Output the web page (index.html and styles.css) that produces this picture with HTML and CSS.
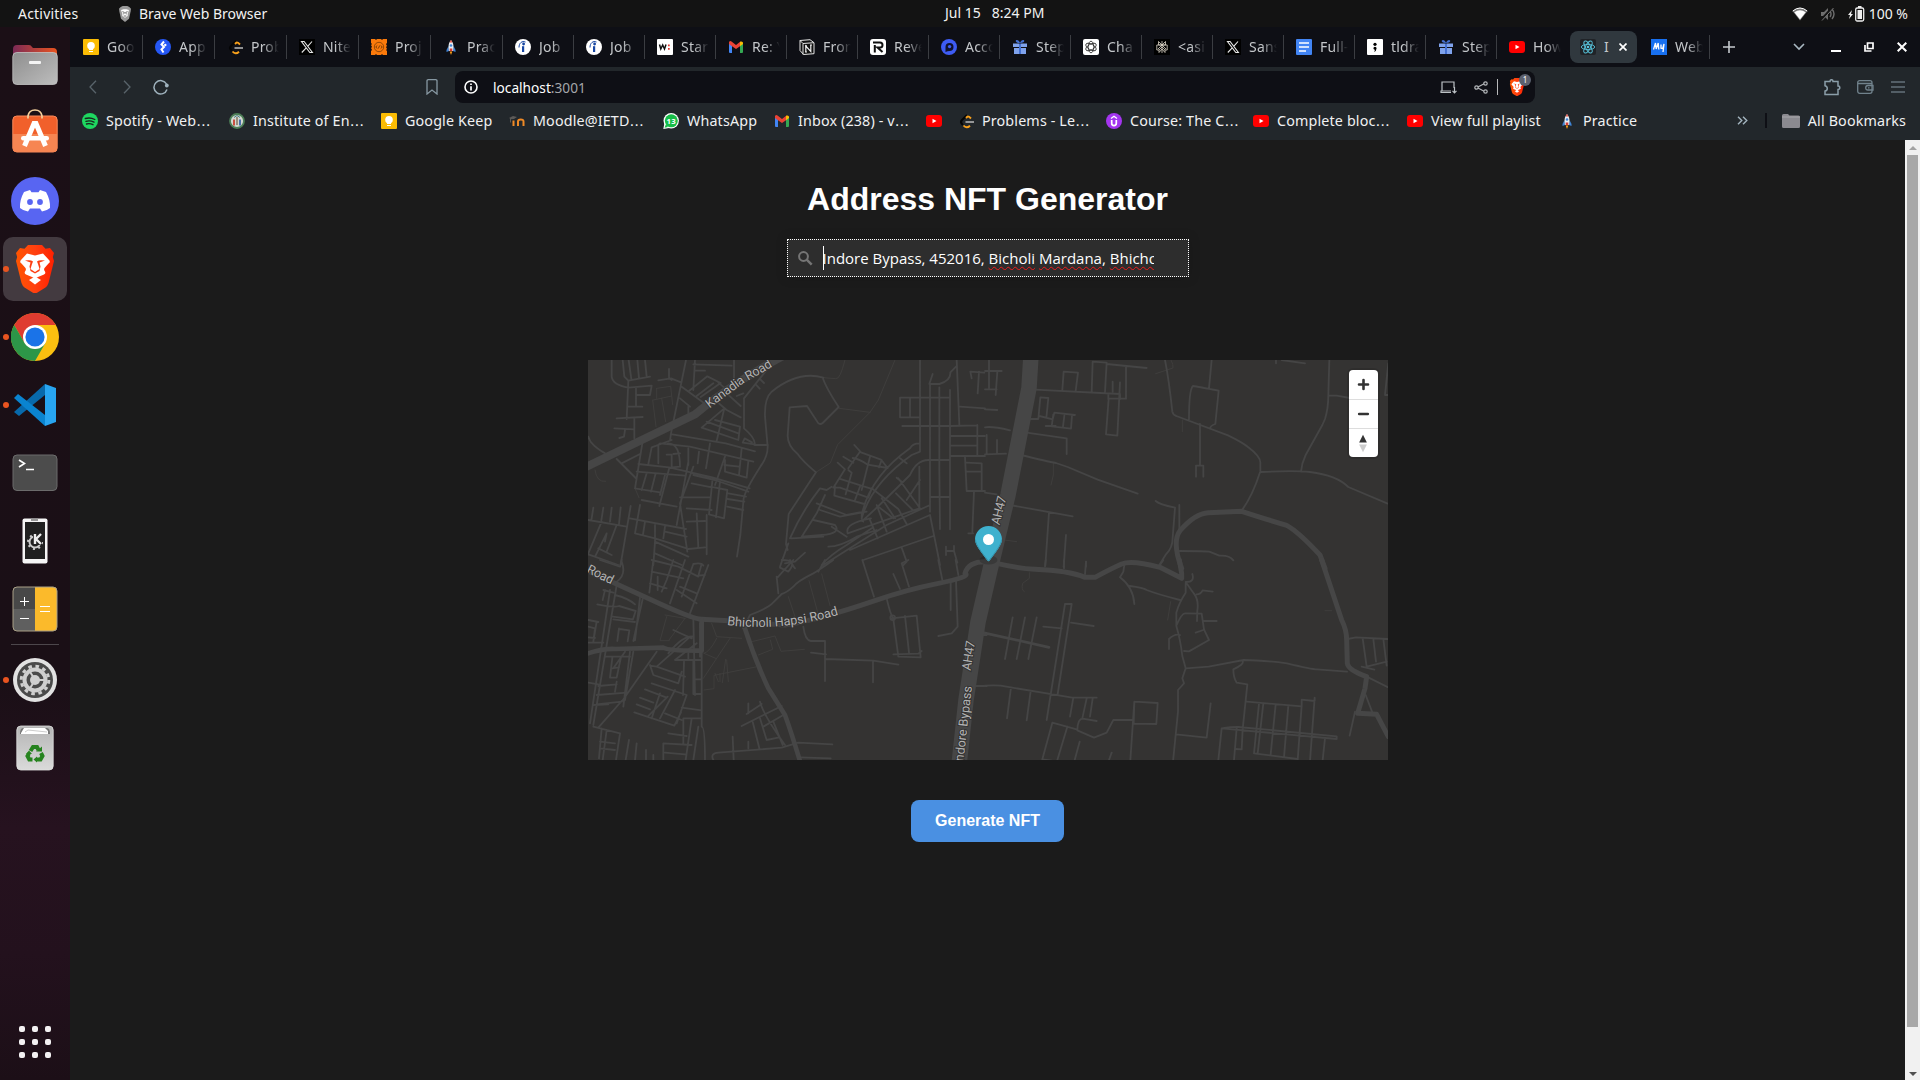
FILE: index.html
```html
<!DOCTYPE html>
<html lang="en">
<head>
<meta charset="utf-8">
<title>Address NFT Generator</title>
<link rel="stylesheet" href="styles.css">
</head>
<body>
<svg class="defs" aria-hidden="true">
  <defs>
    <linearGradient id="gFolder" x1="0" y1="0" x2="1" y2="1"><stop offset="0" stop-color="#8e8e8e"/><stop offset="1" stop-color="#bdbdbd"/></linearGradient>
    <linearGradient id="gTab" x1="0" x2="1"><stop offset="0" stop-color="#7c2a56"/><stop offset="1" stop-color="#e95420"/></linearGradient>
    <linearGradient id="gBrave" x1="0" x2="1"><stop offset="0" stop-color="#ff5500"/><stop offset=".5" stop-color="#ff4010"/><stop offset="1" stop-color="#ff2000"/></linearGradient>
    <linearGradient id="gTrash" x1="0" y1="0" x2="0" y2="1"><stop offset="0" stop-color="#b5b5b5"/><stop offset="1" stop-color="#dadada"/></linearGradient>
  </defs>
  <symbol id="keep" viewBox="0 0 16 16"><rect width="16" height="16" rx="1" fill="#fbbc04"/><circle cx="8" cy="6.800" r="3.800" fill="#fff"/><path d="M6 9h4v2H6zM6 12h4v1H6z" fill="#fff"/></symbol>
  <symbol id="app" viewBox="0 0 16 16"><circle cx="8" cy="8" r="8" fill="#2557f5"/><path d="M9 2.500 6.500 5.500 9 8l-2.500 2.500L8.500 13.500" fill="none" stroke="#fff" stroke-width="2"/><circle cx="10.300" cy="6" r="1.200" fill="#fff"/></symbol>
  <symbol id="leet" viewBox="0 0 16 16"><path d="M9 2 4 7q-2 2 0 4l1 1" fill="none" stroke="#050505" stroke-width="2"/><path d="m8 5 1.500-1.500q1-.5 3.500 2M5.500 12.500q3 3.500 6.500.2" fill="none" stroke="#f9a11b" stroke-width="1.900"/><path d="M7.500 9H16" stroke="#b3b3b3" stroke-width="1.600"/></symbol>
  <symbol id="xlogo" viewBox="0 0 16 16"><rect width="16" height="16" fill="#000"/><path d="M2.500 2.500h2.600l8.300 11h-2.600zM13 2.500 8.700 7.300M7 9.200l-4.200 4.300" fill="none" stroke="#e8e8e8" stroke-width="1.100"/></symbol>
  <symbol id="orange" viewBox="0 0 16 16"><path d="M0 0h4l1 1 1-1h4l1 1 1-1h4v4l-1 1 1 2-1 1 1 2-1 1 1 1v4h-4l-1-1-1 1H6l-1-1-1 1H0v-4l1-1-1-2 1-1-1-2 1-1-1-1z" fill="#fb7a0b"/><circle cx="8" cy="8" r="4.700" fill="none" stroke="#7a3c05" stroke-width=".8"/><path d="m6.300 6.500-1.600 1.500 1.600 1.500m3.400-3 1.600 1.500-1.600 1.500M8.700 6.500l-1.400 3" fill="none" stroke="#5a2c04" stroke-width=".8"/></symbol>
  <symbol id="rocket" viewBox="0 0 16 16"><path d="M5.500 7 3.500 11v2l2.500-1zM10.500 7l2 4v2L10 12z" fill="#3f84d6"/><path d="M8 1C5.500 4 5 7 6 12h4c1-5 .5-8-2-11z" fill="#e9eef3"/><path d="M8 1 6.600 3.500h2.800z" fill="#e84b3c"/><circle cx="8" cy="6.500" r="1.300" fill="#3f84d6"/><path d="M6.700 9.500h2.600V12H6.700z" fill="#d53b35"/><path d="M6.700 12.500h2.600L8 16z" fill="#ff9d13"/></symbol>
  <symbol id="indeed" viewBox="0 0 16 16"><circle cx="8" cy="8" r="8" fill="#fff"/><path d="M7 7.200h2.200V13H7z" fill="#1746a2"/><circle cx="8.600" cy="5" r="1.400" fill="#1746a2"/><path d="M4 8.500C4 4 7 1.500 10.500 3" fill="none" stroke="#1746a2" stroke-width="1"/></symbol>
  <symbol id="wlogo" viewBox="0 0 16 16"><rect width="16" height="16" rx="1" fill="#fff"/><path d="m2.500 5.500 1.300 4.500L5.700 6l1.800 4 1.500-4.500" fill="none" stroke="#111" stroke-width="1.500"/><path d="M11 5.500h1.700v1.700H11zM11 9h1.700v1.700H11z" fill="#e5362d"/></symbol>
  <symbol id="gmail" viewBox="0 0 16 16"><path d="M1 3.500 4 5v9H2q-1 0-1-1z" fill="#4285f4"/><path d="m12 5 3-1.500V13q0 1-1 1h-2z" fill="#34a853"/><path d="M1 5V3q1-1.500 2.500-.5L8 6l4.500-3.500-.5 4.700L8 10 4 7.200z" fill="#ea4335"/><path d="m12 3 .5-.5Q15 2 15 4v1l-3 2.200z" fill="#fbbc04"/></symbol>
  <symbol id="notion" viewBox="0 0 16 16"><path d="m1 1.500 10-.8 4 3v11l-10.500.8L1 11.500z" fill="#111" stroke="#e5e5e5"/><path d="m1 1.500 3 3 11-.8M4 4.500v11" fill="none" stroke="#e5e5e5"/><path d="M6.800 13V7l5 5.500V6M6 6.800h2M11 6h2M6 13h2" fill="none" stroke="#eee" stroke-width="1.200"/></symbol>
  <symbol id="rlogo" viewBox="0 0 16 16"><rect width="16" height="16" rx="3" fill="#fff"/><path d="M3 3.500h7q2.500 0 2.500 2.500T10 8.500H7.500l5 4.500M4.800 6v7.500" fill="none" stroke="#111" stroke-width="2"/></symbol>
  <symbol id="dlogo" viewBox="0 0 16 16"><circle cx="8" cy="8" r="8" fill="#3e5cf4"/><path d="M4.500 13V8A4 4 0 1 1 8.500 12q-2 0-4 1z" fill="#10122c"/><circle cx="8.600" cy="7.600" r="1.700" fill="#3e5cf4"/></symbol>
  <symbol id="gift" viewBox="0 0 16 16"><path d="M1 4.500h6V8H1zM9 4.500h6V8H9zM2 9h5v6H2zM9 9h5v6H9z" fill="#7fa2ec"/><path d="M7 4.500h2V15H7zM8 4C3 4 3 1 5 1s3 3 3 3zm0 0c5 0 5-3 3-3S8 4 8 4z" fill="#4470d2"/></symbol>
  <symbol id="gpt" viewBox="0 0 16 16"><rect width="16" height="16" rx="2" fill="#fff"/><g fill="none" stroke="#222" stroke-width=".8"><ellipse cx="8" cy="8" rx="2.800" ry="5.800"/><ellipse cx="8" cy="8" rx="2.800" ry="5.800" transform="rotate(60 8 8)"/><ellipse cx="8" cy="8" rx="2.800" ry="5.800" transform="rotate(120 8 8)"/></g></symbol>
  <symbol id="perp" viewBox="0 0 16 16"><rect width="16" height="16" fill="#000"/><path d="M8 2v12M4.500 2.500 8 6l3.500-3.500V6h-7zM2.800 6h10.400v5H11L8 8l-3 3H2.800zM5 11v2.500L8 10l3 3.500V11M8 6 4 10M8 6l4 4" fill="none" stroke="#ddd5c8" stroke-width=".8"/></symbol>
  <symbol id="docs" viewBox="0 0 16 16"><rect width="16" height="16" rx="1" fill="#4285f4"/><path d="M3 4h10M3 8h10M3 12h7" stroke="#fff" stroke-width="1.500"/></symbol>
  <symbol id="tldraw" viewBox="0 0 16 16"><rect width="16" height="16" rx="1" fill="#fff"/><circle cx="8" cy="5.300" r="1.600"/><path d="M6.400 9.300a1.600 1.600 0 1 1 3.200 0Q9.500 12 7 13q1-1.500.8-2.200Q6.500 10.500 6.400 9.300z"/></symbol>
  <symbol id="yt" viewBox="0 0 16 16"><rect y="2" width="16" height="12" rx="3" fill="#f00"/><path d="M6.500 5.800v4.400L10.500 8z" fill="#fff"/></symbol>
  <symbol id="react" viewBox="0 0 16 16"><rect width="16" height="16" rx="2" fill="#202327"/><g fill="none" stroke="#58c4dc" stroke-width=".9"><ellipse cx="8" cy="8" rx="6.700" ry="2.600"/><ellipse cx="8" cy="8" rx="6.700" ry="2.600" transform="rotate(60 8 8)"/><ellipse cx="8" cy="8" rx="6.700" ry="2.600" transform="rotate(120 8 8)"/></g><circle cx="8" cy="8" r="1.300" fill="#58c4dc"/></symbol>
  <symbol id="mdn" viewBox="0 0 16 16"><rect width="16" height="16" fill="#1870f0"/><path d="M2.500 10.500 4.500 4l.7 6L7.200 4l.6 6.500M10 5.500v3.700l1.700.3L13 5l-1 8" fill="none" stroke="#fff" stroke-width="1.300"/></symbol>
  <symbol id="spotify" viewBox="0 0 16 16"><circle cx="8" cy="8" r="8" fill="#1ed760"/><path d="M3.300 5.500q5-1.500 9.500 1M4 8.300q4-1.200 8 .8M4.500 11q3.200-1 6.500.7" fill="none" stroke="#18261d" stroke-width="1.400" stroke-linecap="round"/></symbol>
  <symbol id="inst" viewBox="0 0 16 16"><circle cx="8" cy="8" r="7" fill="#d3d8d0" stroke="#4d7f57" stroke-width="1.800"/><path d="M4 6.500h2v6H4z" fill="#c94f40"/><path d="M10 6.500h2v6h-2z" fill="#4a6dac"/><path d="M7.200 4h1.600v8H7.200z" fill="#8b7d68"/><path d="M5 4.500 8 2.500l3 2" stroke="#467d87" fill="none"/></symbol>
  <symbol id="moodle" viewBox="0 0 16 16"><path d="M4.500 13V7.500M9 13V8.500q0-2 2.800-2t2.700 2V13" fill="none" stroke="#f08a26" stroke-width="2"/><path d="m0 5 4-2 4 1-3 2-3 .3V9L1 10V5.500z" fill="#5c5a58"/></symbol>
  <symbol id="whats" viewBox="0 0 16 16"><circle cx="8.200" cy="7.800" r="7.700" fill="#fff"/><path d="M.3 16 1.500 10 6 15z" fill="#fff"/><circle cx="8.300" cy="7.800" r="6.500" fill="#17bd48"/><path d="M1.500 14.700 3 11l2 3z" fill="#17bd48"/><text x="8.200" y="10.700" font-size="7.800" text-anchor="middle" fill="#fff" font-weight="700">13</text></symbol>
  <symbol id="udemy" viewBox="0 0 16 16"><circle cx="8" cy="8" r="8" fill="#a435f0"/><path d="M5.700 7v3.300q0 2.300 2.300 2.300t2.300-2.300V7" fill="none" stroke="#fff" stroke-width="1.700"/><path d="m5 5.500 3-2.300 3 2.300" fill="none" stroke="#fff" stroke-width="1.300"/></symbol>
  <symbol id="folder" viewBox="0 0 18 16"><path d="M0 2.500Q0 1 1.500 1H6l1.500 1.500h9q1.500 0 1.500 1.500v9.500q0 1.500-1.500 1.500h-15Q0 15 0 13.500z" fill="#8b8a90"/><path d="M0 4h18" stroke="#a8a7ab"/></symbol>
  <symbol id="brave" viewBox="0 0 40 48"><path d="M13 0h14l3.500 3.800L35 3l4 5-1.200 4L39 16l-5.500 22q-1 3-3 4.500l-8 5q-2.500 1.500-5 0l-8-5q-2-1.500-3-4.500L1 16l1.200-4L1 8l4-5 4.500.8z" fill="url(#gBrave)"/><path d="M20 10.500 28 8.500l6 6.500q1.800 2-.5 3.500l-4 4.500q-1 2 .5 3.500 1 2-1 3L23 32l-3 1.500-3-1.500-6-2.500q-2-1-1-3 1.500-1.500.5-3.500l-4-4.500q-2.300-1.500-.5-3.500l6-6.500z" fill="#fff"/><path d="m14 35 6-3.500 6 3.500-6 4.500z" fill="#fff"/><path d="M10 15.500q6-1 8 1l-1 2.500-1.500 5 4.500 3 4.500-3-1.500-5-1-2.500q2-2 8-1l-5.500 2 1 4-1 4.500-4.500 2.500-4.500-2.500-1-4.500 1-4z" fill="#fd3e12"/></symbol>
</svg>

<header class="topbar">
  <span class="activities">Activities</span>
  <span class="focused"><svg width="14" height="16" viewBox="0 0 40 48"><path d="M7 3 13 0h14l6 3 5 5-1 8-5 22-12 10L8 38 3 16 2 8z" fill="#9a9a9a"/><path d="m8 12 8-2h8l8 2-4 11v7l-8 5-8-5v-7z" fill="#fff"/><path d="m12 17 6 2-2 6M28 17l-6 2 2 6M16 30h8" fill="none" stroke="#555" stroke-width="2.500"/></svg>Brave Web Browser</span>
  <span class="clock"><span>Jul 15</span><span>8:24 PM</span></span>
  <span class="status">
    <svg width="16" height="14" viewBox="0 0 16 14"><path d="M.5 4Q8-2.500 15.500 4L8 13.500z" fill="#777"/><path d="M2.300 5.200Q8 1.500 13.700 5.200L8 12.500z" fill="#fff"/><path d="M.8 4Q8-2 15.200 4" fill="none" stroke="#fff"/></svg>
    <svg width="16" height="16" viewBox="0 0 16 16"><path d="M1 6h3l4-4v12l-4-4H1z" fill="#6d6d6d"/><path d="M10 5q2 3 0 6M12 3q4 5 0 10" fill="none" stroke="#6d6d6d" stroke-width="1.400"/><path d="M1 14 13 1" stroke="#131313" stroke-width="2.500"/><path d="M2 14.500 13.500 2" stroke="#777"/></svg>
    <span class="power"><svg width="17" height="16" viewBox="0 0 17 16"><path d="M4 4 0 9h2l-1 4 4-5H3z" fill="#eee"/><rect x="7.700" y="2" width="8" height="13" rx="1.500" fill="none" stroke="#eee" stroke-width="1.300"/><path d="M9.500 4h4.500v9H9.500zM10 0h3.500v2H10z" fill="#eee"/></svg>100 %</span>
  </span>
</header>

<div class="desktop">
<aside class="dock">
  <div class="slot"><svg width="46" height="42" viewBox="0 0 46 42"><path d="M1 5q0-4 4-4h12q2 0 3 2l1 1h20q4 0 4 4v14H1z" fill="url(#gTab)"/><rect x=".8" y="8.500" width="44.500" height="32" rx="4" fill="url(#gFolder)" stroke="#c4c4c4" stroke-width=".8"/><rect x="17" y="17" width="12" height="3" rx="1" fill="#f4f4f4"/></svg></div>
  <div class="slot store"><svg width="46" height="44" viewBox="0 0 46 44"><rect x=".8" y="7" width="44.400" height="36" rx="4" fill="#f1602b" stroke="#fa8a5b"/><path d="M1 25h44v14q0 4-4 4H5q-4 0-4-4z" fill="#f68552"/><path d="M16 9.500V7q1-6 7-6t7 6v2.500" fill="none" stroke="#f4cf9c" stroke-width="1.700"/><path d="M12.500 37 22 14.500h2L33.500 37" fill="none" stroke="#fff" stroke-width="5"/><rect x="9" y="27" width="28" height="4.500" rx="2.200" fill="#fff"/></svg></div>
  <div class="slot"><svg width="48" height="48" viewBox="0 0 48 48"><circle cx="24" cy="24" r="24" fill="#5865f2"/><path d="m19 13-6 2Q8.500 23 9 31q3.500 3 8 3.500l2-3h10l2 3q4.500-.5 8-3.500.500-8-4-16l-6-2-1.500 2.200h-7z" fill="#fff"/><circle cx="19" cy="25" r="2.900" fill="#5865f2"/><circle cx="29" cy="25" r="2.900" fill="#5865f2"/></svg></div>
  <div class="slot running focused-app"><svg width="42" height="48"><use href="#brave"/></svg></div>
  <div class="slot running"><svg width="48" height="48" viewBox="0 0 48 48"><circle cx="24" cy="24" r="24" fill="#fbbf10"/><path d="M3.200 12A24 24 0 0 1 44.800 12H24L13.600 30z" fill="#df3c30"/><path d="M3.200 12A24 24 0 0 0 24 48L34.400 30 24 36 13.600 30z" fill="#2d9648"/><circle cx="24" cy="24" r="12" fill="#fff"/><circle cx="24" cy="24" r="9.600" fill="#1a73e8"/></svg></div>
  <div class="slot running"><svg width="42" height="42" viewBox="0 0 42 42"><path d="M0 28 31 0v11L5 32z" fill="#0869ab"/><path d="m0 14 4-4 27 21v11z" fill="#0a84d0"/><path d="m31 0 11 4v34l-11 4z" fill="#28a5f1"/></svg></div>
  <div class="slot"><svg width="46" height="38" viewBox="0 0 46 38"><rect x="1" y="1" width="44" height="35.500" rx="4" fill="#4c4c4c" stroke="#6b6b6b"/><path d="m7 6 5.500 3.500L7 13M14 15.500h8" fill="none" stroke="#fff" stroke-width="1.600"/></svg></div>
  <div class="slot"><svg width="26" height="46" viewBox="0 0 26 46"><rect x=".5" y=".5" width="25" height="45" rx="2" fill="#f5f5f5"/><path d="M9 .5h7V3H9z" fill="#999"/><path d="M3 4h20v37H3z" fill="#202020"/><circle cx="13" cy="24" r="5.500" fill="none" stroke="#ccc" stroke-width="2"/><circle cx="13" cy="24" r="7" fill="none" stroke="#ccc" stroke-width="2" stroke-dasharray="2 3.500"/><path d="M11 15h9v12h-9z" fill="#202020"/><path d="M13 16v10M19 16l-5 5 5 5" fill="none" stroke="#eee" stroke-width="2.400"/></svg></div>
  <div class="slot"><svg width="46" height="46" viewBox="0 0 46 46"><rect x="1" y="1" width="44" height="44" rx="4" fill="#5f5f5f"/><path d="M1 23V5q0-4 4-4h18v22z" fill="#484848"/><path d="M23 1h18q4 0 4 4v36q0 4-4 4H23z" fill="#fbba2b"/><rect x="1" y="1" width="44" height="44" rx="4" fill="none" stroke="#a9a087"/><path d="M8 15.500h9M12.500 11v9M8 32.500h9M28 20.500h10M28 25.500h10" stroke="#fff"/></svg></div>
  <hr>
  <div class="slot running"><svg width="46" height="46" viewBox="0 0 46 46"><circle cx="23" cy="23" r="22" fill="#e2e2e2"/><circle cx="23" cy="23" r="18" fill="#4a4a4a"/><circle cx="23" cy="23" r="13.800" fill="none" stroke="#cfcfcf" stroke-width="3" stroke-dasharray="3.600 3.630"/><circle cx="23" cy="23" r="10.500" fill="none" stroke="#cfcfcf" stroke-width="4"/><circle cx="23" cy="23" r="5" fill="#cfcfcf"/><path d="M23 23h12M23 23l-6-10M23 23l-6 10" stroke="#cfcfcf" stroke-width="2"/></svg></div>
  <div class="slot"><svg width="38" height="46" viewBox="0 0 38 46"><rect x=".8" y="1" width="36.400" height="44" rx="4" fill="url(#gTrash)" stroke="#e1e1e1" stroke-width=".8"/><path d="M4 9q0-6 3-6h24q3 0 3 6z" fill="#767676"/><path d="m5 8 3-5h21l3 3v3H5z" fill="#fff"/><path d="m9 7 3-2 19 2" fill="none" stroke="#ccc"/><g fill="none" stroke="#26831f" stroke-width="4"><path d="m14.500 26 2.500-4h4l1.500 3"/><path d="m25 28 1.500 3-2 3.500h-4"/><path d="M16.500 34.500h-3.200L11.500 31l1.500-2.500"/></g><path d="M20 26.500h6v-5zM21 31.500v6l-3.500-3zM10 29l3-3.500 3 3.500z" fill="#26831f"/></svg></div>
  <div class="apps"><i></i><i></i><i></i><i></i><i></i><i></i><i></i><i></i><i></i></div>
</aside>

<main class="browser">
  <nav class="tabs">
    <div class="tab w"><svg><use href="#keep"/></svg><span>Goo</span></div>
    <div class="tab w"><svg><use href="#app"/></svg><span>App</span></div>
    <div class="tab w"><svg><use href="#leet"/></svg><span>Prob</span></div>
    <div class="tab w"><svg><use href="#xlogo"/></svg><span>Nite</span></div>
    <div class="tab w"><svg><use href="#orange"/></svg><span>Proj</span></div>
    <div class="tab w"><svg><use href="#rocket"/></svg><span>Prac</span></div>
    <div class="tab"><svg><use href="#indeed"/></svg><span>Job</span></div>
    <div class="tab"><svg><use href="#indeed"/></svg><span>Job</span></div>
    <div class="tab"><svg><use href="#wlogo"/></svg><span>Star</span></div>
    <div class="tab"><svg><use href="#gmail"/></svg><span>Re: Y</span></div>
    <div class="tab"><svg><use href="#notion"/></svg><span>Fron</span></div>
    <div class="tab"><svg><use href="#rlogo"/></svg><span>Reve</span></div>
    <div class="tab"><svg><use href="#dlogo"/></svg><span>Acco</span></div>
    <div class="tab"><svg><use href="#gift"/></svg><span>Step</span></div>
    <div class="tab"><svg><use href="#gpt"/></svg><span>Cha</span></div>
    <div class="tab"><svg><use href="#perp"/></svg><span>&lt;asi</span></div>
    <div class="tab"><svg><use href="#xlogo"/></svg><span>Sans</span></div>
    <div class="tab"><svg><use href="#docs"/></svg><span>Full-</span></div>
    <div class="tab"><svg><use href="#tldraw"/></svg><span>tldra</span></div>
    <div class="tab"><svg><use href="#gift"/></svg><span>Step</span></div>
    <div class="tab plain"><svg><use href="#yt"/></svg><span>How</span></div>
    <div class="tab active"><svg><use href="#react"/></svg><span class="sliver">I</span><svg class="x" viewBox="0 0 8 8"><path d="m.5.500 7 7m0-7-7 7" stroke="#fff" stroke-width="1.700"/></svg></div>
    <div class="tab"><svg><use href="#mdn"/></svg><span>Web</span></div>
    <svg class="plus" width="12" height="12" viewBox="0 0 12 12"><path d="M6 0v12M0 6h12" stroke="#c6cace" stroke-width="1.600"/></svg>
    <div class="winctl">
      <svg width="12" height="8" viewBox="0 0 12 8"><path d="m1 1 5 5 5-5" fill="none" stroke="#a9b8c2" stroke-width="1.600"/></svg>
      <svg width="10" height="10" viewBox="0 0 10 10"><path d="M0 9h10" stroke="#fff" stroke-width="2"/></svg>
      <svg width="10" height="10" viewBox="0 0 10 10"><path d="M3.500 1H9v5.500H3.500zM1 3v6h6.500" fill="none" stroke="#fff" stroke-width="1.700"/></svg>
      <svg width="10" height="10" viewBox="0 0 10 10"><path d="m.7.700 8.600 8.600m0-8.600L.7 9.300" stroke="#fff" stroke-width="2"/></svg>
    </div>
  </nav>

  <div class="toolbar">
    <div class="navs">
      <svg width="8" height="14" viewBox="0 0 8 14"><path d="M7 .7 1 7l6 6.300" fill="none" stroke="#59646b" stroke-width="1.300"/></svg>
      <svg width="8" height="14" viewBox="0 0 8 14"><path d="m1 .7 6 6.300-6 6.300" fill="none" stroke="#59646b" stroke-width="1.300"/></svg>
      <svg width="16" height="16" viewBox="0 0 16 16"><path d="M13.500 5A6.700 6.700 0 1 0 14 10.500" fill="none" stroke="#9fb2bd" stroke-width="1.500"/><circle cx="13.800" cy="6.500" r="1.900" fill="#9fb2bd"/></svg>
    </div>
    <svg class="mark" width="12" height="16" viewBox="0 0 12 16"><path d="M1 2q0-1.300 1.300-1.300h7.400Q11 .7 11 2v13l-5-4-5 4z" fill="none" stroke="#8798a2" stroke-width="1.300"/></svg>
    <div class="omnibox">
      <svg width="14" height="14" viewBox="0 0 14 14"><circle cx="7" cy="7" r="6" fill="none" stroke="#fff" stroke-width="1.600"/><path d="M7 6.200V10.500M7 3.500v1.600" stroke="#fff" stroke-width="1.700"/></svg>
      <span class="url"><b>localhost</b>:3001</span>
      <svg width="17" height="13" viewBox="0 0 17 13"><path d="M11 11.500H1V10h10M2 9.500V1h12v6M14.500 6v6M12.500 9.800l2 2 2-2" fill="none" stroke="#bdc2c6" stroke-width="1.200"/></svg>
      <svg class="share" width="14" height="13" viewBox="0 0 14 13"><path d="M3 6.500 11.500 2M3 6.500 11.500 11" stroke="#b5b8bb" stroke-width="1.200"/><g fill="#0e0f15" stroke="#b5b8bb" stroke-width="1.200"><circle cx="2.500" cy="6.500" r="1.700"/><circle cx="11.500" cy="2.500" r="1.700"/><circle cx="11.500" cy="10.500" r="1.700"/></g></svg>
      <i class="bar"></i>
      <span class="shield"><svg width="16" height="18"><use href="#brave"/></svg><em>1</em></span>
    </div>
    <div class="tools">
      <svg width="17" height="17" viewBox="0 0 17 17"><path d="M1 2.500h5q0-1.800 1.500-1.800T9 2.500h5V7q1.800 0 1.800 1.700T14 10.400V15.500H1V12q2.300-.5 2.300-2.600T1 6.700z" fill="none" stroke="#8b9ea9" stroke-width="1.500"/></svg>
      <svg width="17" height="14" viewBox="0 0 17 14"><rect x=".7" y=".7" width="14.300" height="12.600" rx="2" fill="none" stroke="#71828c" stroke-width="1.300"/><path d="M1 3.500h14M16 5.500h-5q-2.300 0-2.300 2.300T11 10h5zM11 7.800h1.500" fill="none" stroke="#71828c" stroke-width="1.300"/></svg>
      <svg width="14" height="12" viewBox="0 0 14 12"><path d="M0 1h14M0 6h14M0 11h14" stroke="#8396a1" stroke-width="1.200"/></svg>
    </div>
  </div>

  <div class="bookmarks">
    <a style="width:129px"><svg><use href="#spotify"/></svg>Spotify - Web<s>…</s></a>
    <a style="width:134px"><svg><use href="#inst"/></svg>Institute of En<s>…</s></a>
    <a style="width:110px"><svg><use href="#keep"/></svg>Google Keep</a>
    <a style="width:136px"><svg><use href="#moodle"/></svg>Moodle@IETD<s>…</s></a>
    <a style="width:93px"><svg><use href="#whats"/></svg>WhatsApp</a>
    <a style="width:134px"><svg><use href="#gmail"/></svg>Inbox (238) - v<s>…</s></a>
    <a style="width:14px"><svg><use href="#yt"/></svg></a>
    <a style="width:130px"><svg><use href="#leet"/></svg>Problems - Le<s>…</s></a>
    <a style="width:129px"><svg><use href="#udemy"/></svg>Course: The C<s>…</s></a>
    <a style="width:136px"><svg><use href="#yt"/></svg>Complete bloc<s>…</s></a>
    <a style="width:134px"><svg><use href="#yt"/></svg>View full playlist</a>
    <a style="width:80px"><svg><use href="#rocket"/></svg>Practice</a>
    <div class="rest">
      <svg class="more" viewBox="0 0 11 9"><path d="m1 .7 3.800 3.800L1 8.300M6 .7l3.800 3.800L6 8.300" fill="none" stroke="#a3b4bf" stroke-width="1.400"/></svg>
      <i></i>
      <a><svg class="fold"><use href="#folder"/></svg>All Bookmarks</a>
    </div>
  </div>

  <div class="viewport">
    <section class="page">
      <h1>Address NFT Generator</h1>
      <div class="search">
        <svg width="15" height="15" viewBox="0 0 15 15"><circle cx="5.500" cy="5.500" r="4.400" fill="none" stroke="#757575" stroke-width="2"/><path d="m8.700 8.700 5 5" stroke="#757575" stroke-width="2.500"/></svg>
        <div class="query">Indore Bypass, 452016, <u>Bicholi</u> <u>Mardana</u>, <u>Bhicholi</u></div>
      </div>
      <div class="map">
        <svg class="roads" width="800" height="400" viewBox="0 0 800 400">
          <g class="nw" transform="translate(-3 -5) scale(.33333)">
            <path class="faint" d="M205 135l55-12M213 215l-10-80M230 130l12 70M215 100l42-6 6 55M215 100v30M30 345q5 38 32 34M150 400l12 28M780 15q-15 60-28 56l-37-3M930 15l-50 120-25 37-97 97-22 55-43 28M855 172l-92-12"/>
            <path d="M80 15v50q3 25 50 33l70-6-5 28h-40M113 15l5 50 12 12-5 115M130 77l65-12M131 15l8 57M157 15l5 55M180 15l5 50M153 97v55M130 155h42M95 190l78-4M88 220l60 3M148 190v60M120 225l-3 20-14 4M303 15l-45 220-3 22M220 76l38-6 30 12M252 42v28l8 5M290 95l75 55M285 130l30 25M310 155v20M330 15l-5 90M325 28l115 4M330 47h30M312 108l55-44 40 20-60 42M385 85l-50 38M400 83l30 25M447 15v55M545 45l-68 85v90q35 30 32 48l-36-5 6-13 22 12M525 72l12 12M512 88l12 13M475 115l-20 8M425 115l42 38M390 135l35 30 42 22M418 160l-68 58 45 15 65 22 5-40-75-20M418 160l-23 98M365 200l95 35M262 238l160 27 88 24M548 270h-40M260 255l-60 22-10 50M172 265l-22 135 75 12M110 325l55-28M95 312l57 57M10 245q5 25 55 53M220 270l5-5 90 10 190 45M220 270v55M250 265q35 0 35 70l-25 2v-38l-15 0M265 297l20-2M310 280v50M342 290l-4 35M375 265l-12 75M160 327l92 10 130 30 112 33M155 350l145 12M310 320l-35 190M325 335l-40 110 22 145M253 338l-30 115M185 355l-15 50M212 355l-14 55M240 360l-15 60M420 305l-30 85M418 330l45 5M420 315v35l65 18 5-50M470 280l-8 80M325 360l65 15 100 35M320 385l60 12M382 378l-10 100 45 12 10-85-50-10M405 380l-12 107M285 427h90M170 435l105 20M430 415l53 10M428 432l50 8M427 455l48 10M305 460l75 5M305 500l55-2M335 475l5 103M365 480v118M310 582l50-5M25 458l-6 38M55 458l-6 38M80 458l-5 42M107 457l-5 50M137 453l-30 175M165 450l-15 85 60 15 95 30M10 495l115 20M135 490l168 32M180 500l-6 38M210 510v50l100 45M240 515l-5 35M240 530l65 15M210 595l80 35M210 560l-5 70M10 598l90 32M50 500l-42 100M65 535l-35 70M65 535l-5 25M40 580l40 20M95 510l-30 80"/>
            <path d="M715 68q-75-22-155 42-22 20-20 75l8 90q0 30-22 60-45 70-50 95l-10 110-10 65M713 68q10 30 48 88l-48 48q-10 8-17-5l-30-46-52 4-6 85q0 30 30 55 15 22 55 55l-82 125-8 90 5 18M610 565l-25 70M1005 15v275l-25 10q-120 85-150 190M1115 15l8 193M1035 90v380M1043 57l-10 30h30q35-10 33-35l18-18M1063 97v245l2 180M1095 105v418M945 128h150M1003 187h-58v-59M975 130v55M952 213h145l80-2M1125 155l75 5M1160 70l-4-20 42 3M1182 50l-4 65M1177 210v90M1095 243h105M1095 272h82M1098 303h102M1140 305l5 103h55M1145 323l45 2v83M1145 350h45M1167 410l-5 120M1150 535h15M1003 265q-20 0-28 15-120 85-145 200 0 20 5 20M1095 315h-65q-35 0-55 45-100 100-140 135M1035 426h60M1003 335v125l-215 75q-10-30 70-45M1035 450l-130 60-190 120M1035 480l-240 105M1035 480l30 150M1045 543l-210 72M950 578l15 42-10 10M808 270l20 22 60 22 20 25-60-10q-30-20-45-20M825 290l-35 50M775 305l30 18M890 315l-8 22M855 305l-25 100M758 323l22 20-35 55 20 0 85 30M790 345l10 8-18 65M765 372l95 30-10 25M750 395l-2 27 90 25M825 395l-15 40M860 400l80 62 25 45M940 370l65 90M933 415l50 50M875 450l30 80M880 455l45 35M890 430l40 60M1005 375l-40 60M965 325l-20-15M950 380l-15-12M853 490l25 60M860 520l-75 50q-50 30-75 60M875 525l-60 20q-50 30-85 30M720 420l-25 55-45 70 60-5q60-5 40-30l-65-15M620 550l95-5M695 445l90 35 50-10M705 465l60 20 80-15M785 545l-45-30M615 550q35-80 90-150l20 5 15-10M1083 600v-25M1085 588h22l10 35M1107 588v-15M600 625l30-5 30-27"/>
            <path class="main" style="stroke-width:24" d="M-5 340 160 260 330 178Q440 85 600 0"/>
          </g>
          <g class="ne" transform="translate(397 -5) scale(.33333)">
            <path class="faint" d="M558 15q8 15 6 24l-52 17M592 195v35M205 325v35l-7 30M50 554l45 6"/>
            <path d="M12 15v85M0 48h50M37 50l-5 70M0 103h35M0 163l37 2M0 217q20-4 75 9M0 298l63-2M5 240v55M36 255v40M0 413l35 5M150 104l255 13M232 105l4-55 43 3-7 55M320 110l3-90 42 3-5 88M365 27l120 12M423 33v98h-52l-8 107 34 4 8-160M383 80v30M405 117v15M370 118v15M133 192h27l6-65 24 2-6 60M163 183l40 10 5-20 62 7M205 178l-5 36 58 7 3-40M182 213h30M238 182l-4 33M125 233l120 17v47M108 300q80 20 105 24l35 12 90 38 120 42M75 450l188 34M192 472l-11 160M243 540l-7 95M303 620v15M540 15q12 60 22 155 2 10 12 13l155 58q45 22 60 35 40 30 37 50v22M680 15l-8 85M612 193q0-90 12-100 15 2 77 14l-10 100q-15 5-15 12M645 207v125M633 365v-33h22v33M873 15v10M890 15l70 10M1033 15l-3 105q0 40-10 72l-8 18-50 90q-12 25-14 50M1030 122l25 0 40 7M1210 25l-10 95h10M825 352l5-1q100-5 145 0 80 10 115 45l118 50M825 352q-22 70-55 115M512 438q10 10 58 20l-7 90q0 30-20 50l-20 32M583 450v75M583 588q80 0 90 2l30 12q30-2 42 14"/>
            <path class="main" style="stroke-width:15" d="M590 640Q560 560 585 527 630 475 670 473L770 469Q850 495 905 511 940 530 1005 600L1020 640"/>
          </g>
          <g class="sw" transform="translate(-3 200) scale(.33333)">
            <path class="faint" d="M610 110l20 60M672 62l26 95M710 42l25 95M240 165l60 10M245 170l-20 72 28 0M300 175l-48 65M380 190l15 40 75 5M395 235q-20 40-38 45M435 235l-80 120M357 390l30-4 0-40 125-25M357 280l35 15M500 245l70-17 18 46 70-6M520 285l43-17-7-28M422 298l-10 70M425 300l5 65M405 340v25M390 340l10 25"/>
            <path d="M45 0l60 20 5-20M95 65q30-20 15-60M205 0l-12 98M265 0l-20 60-15 35M300 0l-45 130M370 15l-55 145M200 0l80 20 60 30M200 35l95 20M195 70l50 15M218 50v40M285 80l50 20M350 12l-10 35 20-2M325 12l-35 98M325 12q25-5 30 5M275 90l60 40M95 75l-70 420M75 90l-60 400M175 108l-30 135M165 113l-15 128M55 90q0 0 30 8M60 90l-7 30M37 133q50 10 65 5l50 15-8 25-60-8M90 105q40 10 60 28M10 180l30 6M10 200l20 5-5 40M35 185l-10 60M10 232l20 2M10 248h45M85 178l65 8M102 205l-5 38M103 207l30 4-5 33M120 275l-35 50M145 275l-25 145M135 275l-20 165M60 290h75M82 293l-7 60h20l13-62M80 325l22-3M40 378l55-5M95 365l-5 30M35 405l90-7M10 368l30 5M35 433l75-8 105-150M110 423l-70 80M25 435l45-2M325 175l5 230M345 190v100M265 210l55 25M325 230q-30-5-75 50M310 235l-95 85-20-3M335 250l-65 50h80M310 280v20M350 275v225q10 0 10 100M325 302v100h25M297 305l-3 100M325 358h25M215 320l85 30M195 315l10 30 75 25 10-35M200 370l105 35-30 85M180 388l65 25M248 410l-60 60M165 413l40 15M155 433l40 15M148 457l120 40 20-40M225 400l-25 75M240 460l50 20M270 390l-45 85M290 443l60 8M295 475h55M320 475l-18 125M295 475v75M250 520l55 8M235 600v-50l85 5M240 578l60 5M340 500l-15 100M385 600q-10-20 15-22l190-15 50-15 102 5M443 530l3 70M490 545v20M25 500l80 20-12 80M65 510l-12 90M50 505l-8 90M45 545l45 5M45 565l45 5M132 540l-10 60M155 550l-5 50M183 570v30M205 585v15M525 425q10 40 75 130M485 462l45-30M490 430v30M470 498q100-50 120-60M503 485l20 80M525 475l20 65 38-8M535 500l60-35M565 485l28 70M645 592l92 3M745 0q-45 32-60 40-50 25-60 40-20 18-35 22l-25 25q-10 15-70 38l-20 40M720 0l-20 35M655 200q5 40 22 43l43 0v120M678 278l45 5M720 297l145 5 75 12M864 305v62M832 0l35 110M970 0l-20 10 22 70M925 42l20 45M905 115q10 45 20 62l15 113 67 2-12-125-75 8M960 168l12 110M925 283l75-2 10-8M1060 0l12 60M1112 0l8 45M1097 65v85M1113 60l5 140-18 20-40 8M575 55l50-55M575 50l5 50M590 0q50 0 20 35l-25-12M615 0q10 20 15 25M1165 378h40M1195 225h10"/>
            <circle cx="923" cy="173" r="7"/>
            <path class="main" style="stroke-width:15" d="M-20 20Q100 75 200 120 325 178 350 178L430 182Q520 190 600 195 700 180 870 122 960 90 1060 70T1140 40Q1150 5 1200 5"/>
            <path class="main" style="stroke-width:14" d="M-5 285Q50 265 90 267L235 263Q250 273 350 272V180"/>
            <path class="main" style="stroke-width:14" d="M478 200Q510 300 550 385L600 465Q620 520 647 610"/>
          </g>
          <g class="se" transform="translate(397 200) scale(.33333)">
            <path class="faint" d="M133 38v17l-20 15q-5 20 5 25M557 125l-9 55M1020 152h20"/>
            <path d="M182 0l-2 20M237 0v25M303 5l-3 38M418 15l-3 20-10 17q40 30 43 80M435 78q40 5 50 12 30 12 100 30M535 0l-10 15M602 70v28q-20 30-28 60v40q12 40 18 90l10 37-10 30 5 15-18 20v65l-15 150M622 42q8 25-20 24l25 35q15 20 10 50l-1 32M635 103q12 0 18-12l30 4M575 195q15-35 25-35l50 1 7 47 15 32-60 34-15-1M655 183h40M655 210l-23 8M585 225q-15-5-33 12v30M603 325l68-5 105-20q50 0 130 10 75 18 90 18l90 7M773 303q5 10-28 25 0 25 10 40l32 5-14 135-3 60-17-1M83 172l-23 125M120 172l-25 125M155 172l-25 125M175 200l55 5M240 132l-55 348M240 132h20l-42 270M258 188l68 10M0 377q30-2 47 0l215 36h73M78 382l-12 93M137 393l-12 88M265 413l-10 57M305 415l-13 60M323 415l-8 55M335 483l-42-7q-15 0-16 35l50 22 38-15 20-38h60M448 425l70 4-4 63-68-1zM448 425l-12 175M275 508l-73-20-30 110 28 4M247 500l-30 100M284 545l-15 55M380 578l-8 22M677 430l-12 103-92-10M785 425l165 14 0-20 39 4v-10l-14 190M822 430l-15 150 130 17M835 430l-17 150M872 433l-15 150M910 437l-13 155M950 437l-12 163M710 505q35-5 50-4l295 28v8l-345-32-10 95M755 505l-8 95M1020 535l-7 65M1088 237l25-5 95 5M1133 235l12 85 60-15M1165 237l8 68M1195 237l10 80M1130 320l38 9M1145 350l65 32M1142 405l20 52M1110 455l-16 72"/>
            <path class="main" style="stroke-width:8" d="M-10 217 192 262"/>
            <path class="main" style="stroke-width:15" d="M35 10Q100 25 150 28 250 32 300 52H330Q380 25 410 12 440 0 525 22L590 55V40L583 0M1010 0Q1050 120 1070 180 1085 210 1085 240L1087 310Q1090 330 1145 350L1140 385 1118 460 1175 463 1210 530"/>
          </g>
          <path class="main" style="stroke-width:15.500" d="M443-5 441 28 420 135 402 210 390 262 378 340 371 405"/>
          <g class="labels">
            <path id="l1" d="M121.500 48.500 155 23.500 190 3.500"/><path id="l2" d="M139 265Q195 272 253 254"/><path id="l3" d="M411.500 165.500 420 131"/><path id="l4" d="M382.500 311 388 275"/><path id="l5" d="M375 405 384.500 322"/><path id="l6" d="M-2 212 30 228"/>
            <text><textPath href="#l1" textLength="76">Kanadia Road</textPath></text>
            <text><textPath href="#l2" textLength="113">Bhicholi Hapsi Road</textPath></text>
            <text><textPath href="#l3" textLength="29">AH47</textPath></text>
            <text><textPath href="#l4" textLength="30">AH47</textPath></text>
            <text><textPath href="#l5" textLength="79">Indore Bypass</textPath></text>
            <text><textPath href="#l6" textLength="28">Road</textPath></text>
          </g>
        </svg>
        <svg class="marker" width="27" height="41" viewBox="0 0 27 41"><ellipse cx="13.500" cy="34" rx="9" ry="4.500" fill="#000" opacity=".18"/><path d="M27 13.500C27 19.070 20.250 27 14.750 34.500 14.020 35.500 12.980 35.500 12.250 34.500 6.750 27 0 19.220 0 13.500 0 6.040 6.040 0 13.500 0S27 6.040 27 13.500Z" fill="#3fb1ce"/><path d="M.5 13.500C.5 19 7 26.500 12.700 34.200q.8 1 1.600 0C20 26.500 26.500 19 26.500 13.500" fill="none" stroke="#3592aa"/><circle cx="13.500" cy="13.500" r="5.500" fill="#fff"/></svg>
        <div class="zoomctl">
          <svg viewBox="0 0 29 29"><path d="M14.500 10v9M10 14.500h9" stroke="#333" stroke-width="2.600" stroke-linecap="round"/></svg>
          <svg viewBox="0 0 29 29"><path d="M10 14.500h9" stroke="#333" stroke-width="2.600" stroke-linecap="round"/></svg>
          <svg viewBox="0 0 29 29"><path d="m10 14 4-8 4 8z" fill="#333"/><path d="m10 16 4 8 4-8z" fill="#ccc"/></svg>
        </div>
      </div>
      <button class="generate">Generate NFT</button>
    </section>
    <div class="scrollbar"><svg width="8" height="4" viewBox="0 0 8 4"><path d="m0 4 4-4 4 4z" fill="#a3a3a3"/></svg><i></i><svg width="8" height="4" viewBox="0 0 8 4"><path d="m0 0 4 4 4-4z" fill="#505050"/></svg></div>
  </div>
</main>
</div>
</body>
</html>
```
FILE: styles.css
```css
* { box-sizing: border-box; }
body {
  margin: 0;
  width: 1920px;
  height: 1080px;
  overflow: hidden;
  display: flex;
  flex-direction: column;
  background: #1b1b1b;
  color: #fff;
  font: 14px "Noto Sans", "Open Sans", sans-serif;
}
svg { display: block; flex: none; }
.defs { width: 0; height: 0; position: absolute; }

.topbar {
  flex: none;
  height: 27px;
  background: #131313;
  color: #f2f2f2;
  display: grid;
  grid-template-columns: 118px 827px 200px 1fr;
  align-items: center;
}
.activities { padding-left: 18px; letter-spacing: .2px; }
.focused { display: flex; gap: 7px; align-items: center; }
.clock { display: flex; gap: 11px; font-size: 14px; position: relative; top: -1px; }
.status { display: flex; justify-content: flex-end; align-items: center; gap: 12px; padding-right: 12px; }
.power { display: flex; gap: 4px; align-items: center; }

.desktop { flex: 1; display: flex; min-height: 0; }
.dock {
  width: 70px;
  flex: none;
  display: flex;
  flex-direction: column;
  align-items: center;
  padding-top: 4px;
  background: linear-gradient(#1b0f16 0, #1a0f16 62%, #26121f 76%, #23111d 88%, #1c0f17 100%);
}
.slot {
  width: 64px;
  height: 64px;
  margin: 2px 0;
  flex: none;
  border-radius: 10px;
  display: flex;
  align-items: center;
  justify-content: center;
  position: relative;
}
.store { padding-bottom: 5px; }
.focused-app { background: #433a40; }
.running::before {
  content: "";
  position: absolute;
  left: 0;
  top: 29px;
  width: 6px;
  height: 6px;
  border-radius: 50%;
  background: #e95420;
}
.dock hr { width: 48px; height: 1px; margin: 1px 0; border: 0; background: #4d474c; flex: none; }
.apps {
  margin: auto 0 22px;
  display: grid;
  grid-template-columns: repeat(3, 6px);
  gap: 7px;
}
.apps i { width: 6px; height: 6px; border-radius: 2px; background: #f3f1f2; }

.browser { flex: 1; display: flex; flex-direction: column; min-width: 0; }
.tabs {
  height: 40px;
  flex: none;
  padding-left: 1px;
  background: #0e0f15;
  display: flex;
  align-items: center;
}
.tab {
  width: 71px;
  height: 24px;
  flex: none;
  display: flex;
  align-items: center;
  gap: 8px;
  padding-left: 12px;
  border-right: 1px solid #3b3d42;
  color: #c4c7ca;
}
.tab.w { width: 72px; }
.tab.plain, .tab.active { border-color: transparent; }
.tab svg { width: 16px; height: 16px; }
.tab span {
  width: 28px;
  overflow: hidden;
  white-space: nowrap;
  line-height: 20px;
  margin-top: -1px;
  letter-spacing: .2px;
  -webkit-mask-image: linear-gradient(90deg, #000 45%, transparent);
  mask-image: linear-gradient(90deg, #000 45%, transparent);
}
.tab.active {
  width: 67px;
  height: 32px;
  margin: 0 2px;
  padding-left: 10px;
  border: 0;
  border-radius: 8px;
  background: #30383e;
}
.tab.active .sliver { width: 5px; margin: 0 2px 0 0; mask-image: none; -webkit-mask-image: none; }
.tab.active .x { width: 8px; height: 8px; }
.plus { margin-left: 13px; }
.winctl { margin-left: auto; margin-right: 13px; display: flex; gap: 23px; align-items: center; }
.winctl svg:first-child { margin-right: 3px; }

.toolbar {
  height: 40px;
  flex: none;
  background: #22272b;
  display: flex;
  align-items: center;
}
.navs { width: 356px; padding-left: 19px; display: flex; align-items: center; gap: 26px; }
.navs svg:nth-child(3) { margin-left: -4px; }
.mark { margin-right: 17px; }
.omnibox {
  width: 1080px;
  height: 32px;
  border-radius: 8px;
  background: #0e0f15;
  display: flex;
  align-items: center;
  padding: 0 10px 0 9px;
}
.url { margin-left: 15px; margin-right: auto; color: #a3a6aa; font-size: 13.700px; }
.url b { font-weight: 400; color: #fff; }
.share { margin-left: 17px; }
.bar { width: 1px; height: 16px; margin: 0 11px 0 9px; background: #b7b8ba; }
.shield { position: relative; }
.shield em {
  position: absolute;
  left: 10px;
  top: -4px;
  width: 12px;
  height: 12px;
  border-radius: 6px;
  background: #5b606e;
  font: 8px/12px "Noto Sans", sans-serif;
  text-align: center;
}
.tools { margin-left: auto; margin-right: 15px; display: flex; align-items: center; gap: 17px; }
.tools svg:first-child { margin-right: -1px; }

.bookmarks {
  height: 33px;
  flex: none;
  padding: 0 14px 6px 12px;
  background: #22272b;
  display: flex;
  align-items: center;
  gap: 18px;
  color: #f0f1f2;
  font-size: 14.300px;
  line-height: 18px;
  letter-spacing: .15px;
}
.bookmarks a { display: flex; align-items: center; flex: none; white-space: nowrap; }
.bookmarks a svg { width: 16px; height: 16px; margin-right: 8px; }
.bookmarks a .fold { width: 18px; }
.bookmarks s { text-decoration: none; font-family: "DejaVu Sans", sans-serif; }
.rest { margin-left: auto; display: flex; align-items: center; }
.rest .more { width: 11px; height: 9px; margin-right: 17px; }
.rest i { width: 2px; height: 15px; margin-right: 15px; background: #0e0f15; }

.viewport { flex: 1; display: flex; min-height: 0; }
.page { flex: 1; display: flex; flex-direction: column; align-items: center; background: #1b1b1b; }
h1 { margin: 41px 0 0; height: 37px; font: bold 32px/37px "Liberation Sans", Arial, sans-serif; }
.search {
  width: 402px;
  height: 38px;
  margin-top: 21px;
  padding-left: 10px;
  border: 1px dotted #fff;
  background: #2d2d2d;
  box-shadow: 0 0 10px 2px rgba(0, 0, 0, .1);
  display: flex;
  align-items: center;
}
.query {
  width: 331px;
  height: 24px;
  margin-left: 10px;
  border-left: 1px solid #fff;
  overflow: hidden;
  white-space: nowrap;
  font: 15px/24px "Open Sans", "Noto Sans", sans-serif;
  text-indent: -1px;
}
.query u { text-decoration: underline wavy #f01c1c 1px; text-decoration-skip-ink: none; text-underline-offset: 2px; }

.map { width: 800px; height: 400px; margin-top: 83px; background: #343332; position: relative; overflow: hidden; }
.roads { fill: none; }
.roads path, .roads circle { stroke: #454545; stroke-width: 5.500; stroke-linejoin: round; stroke-linecap: round; fill: none; }
.roads .faint { stroke: #41403f; stroke-width: 2.500; }
.roads .main { stroke: #464646; }
.roads .labels path { stroke: none; }
.labels text {
  font: 12.700px "Roboto", sans-serif;
  fill: #b2b2b2;
  stroke: #343332;
  stroke-width: 2px;
  paint-order: stroke;
}
.marker { position: absolute; left: 387px; top: 166px; }
.zoomctl {
  position: absolute;
  right: 10px;
  top: 10px;
  width: 29px;
  border-radius: 4px;
  background: #fff;
  box-shadow: 0 0 0 2px rgba(0, 0, 0, .1);
}
.zoomctl svg { width: 29px; height: 29px; }
.zoomctl svg + svg { border-top: 1px solid #ddd; }
.generate {
  width: 153px;
  height: 42px;
  margin-top: 40px;
  padding: 0;
  border: 0;
  border-radius: 8px;
  background: #4a90e2;
  color: #fff;
  font: bold 16px "Liberation Sans", Arial, sans-serif;
}
.scrollbar {
  width: 15px;
  background: #f1f1f1;
  display: flex;
  flex-direction: column;
  align-items: center;
  padding: 6px 0 4px;
}
.scrollbar i { width: 11px; height: 872px; margin: 5px 0 auto; background: #a8a8a8; }
```
